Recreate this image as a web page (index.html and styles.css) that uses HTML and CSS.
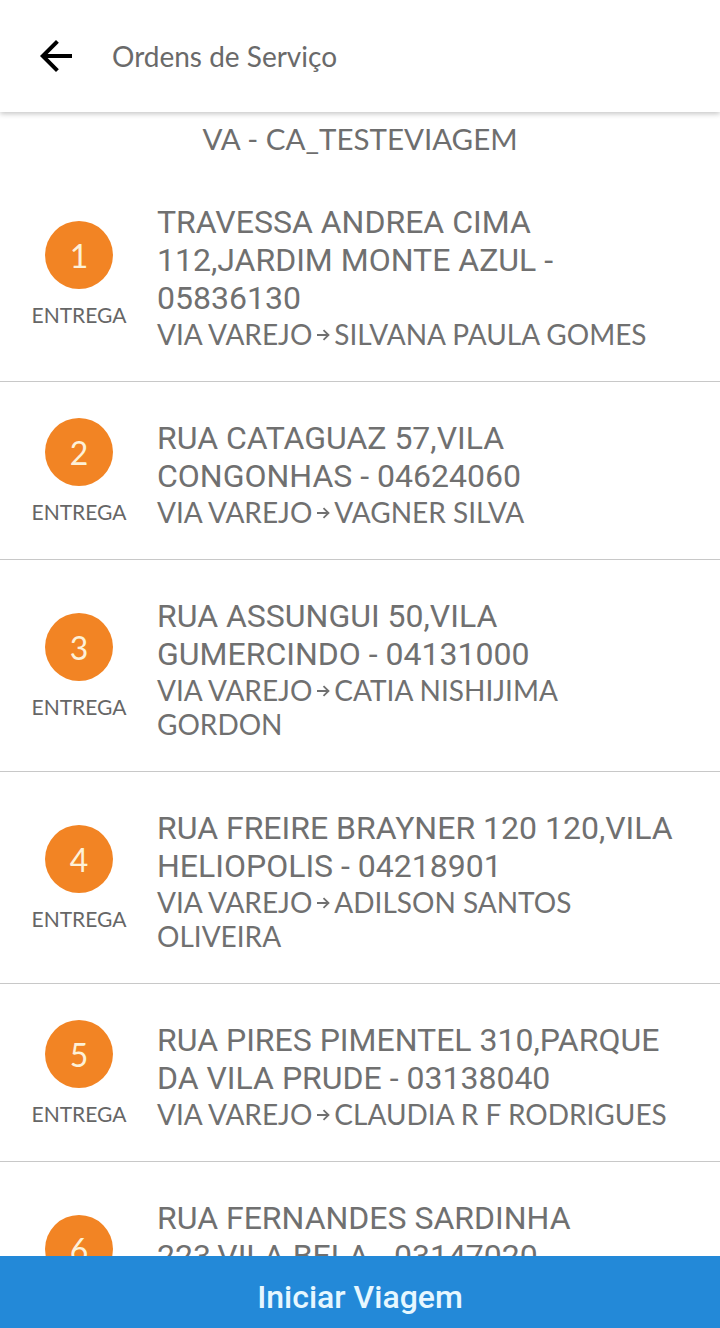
FILE: index.html
```html
<!DOCTYPE html>
<html lang="pt-BR">
<head>
    <meta charset="UTF-8">
    <meta name="viewport" content="width=device-width, initial-scale=1.0">
    <title>Ordens de Serviço</title>
    <link rel="stylesheet" href="styles.css">
</head>
<body>
    <div id="header">
        <svg class="backIcon" viewBox="4 4 16 16" width="32" height="32">
            <path d="M20 11H7.83l5.59-5.59L12 4l-8 8 8 8 1.41-1.41L7.83 13H20v-2z" fill="#000"/>
        </svg>
        <span class="title">Ordens de Serviço</span>
    </div>
    <div id="tripName">VA - CA_TESTEVIAGEM</div>
    <div id="list">
        <div class="item">
            <div class="stop">
                <div class="badge">1</div>
                <div class="kind">ENTREGA</div>
            </div>
            <div class="info">
                <div class="address">TRAVESSA ANDREA CIMA 112,JARDIM MONTE AZUL - 05836130</div>
                <div class="route">VIA VAREJO<svg class="arrow" viewBox="0 0 14 12" width="14" height="12"><path d="M1 6h11.5M7.5 1.2l5 4.8-5 4.8" fill="none" stroke="#707070" stroke-width="1.8"/></svg>SILVANA PAULA GOMES</div>
            </div>
        </div>
        <div class="item">
            <div class="stop">
                <div class="badge">2</div>
                <div class="kind">ENTREGA</div>
            </div>
            <div class="info">
                <div class="address">RUA CATAGUAZ 57,VILA CONGONHAS - 04624060</div>
                <div class="route">VIA VAREJO<svg class="arrow" viewBox="0 0 14 12" width="14" height="12"><path d="M1 6h11.5M7.5 1.2l5 4.8-5 4.8" fill="none" stroke="#707070" stroke-width="1.8"/></svg>VAGNER SILVA</div>
            </div>
        </div>
        <div class="item">
            <div class="stop">
                <div class="badge">3</div>
                <div class="kind">ENTREGA</div>
            </div>
            <div class="info">
                <div class="address">RUA ASSUNGUI 50,VILA GUMERCINDO - 04131000</div>
                <div class="route">VIA VAREJO<svg class="arrow" viewBox="0 0 14 12" width="14" height="12"><path d="M1 6h11.5M7.5 1.2l5 4.8-5 4.8" fill="none" stroke="#707070" stroke-width="1.8"/></svg>CATIA NISHIJIMA GORDON</div>
            </div>
        </div>
        <div class="item">
            <div class="stop">
                <div class="badge">4</div>
                <div class="kind">ENTREGA</div>
            </div>
            <div class="info">
                <div class="address">RUA FREIRE BRAYNER 120 120,VILA HELIOPOLIS - 04218901</div>
                <div class="route">VIA VAREJO<svg class="arrow" viewBox="0 0 14 12" width="14" height="12"><path d="M1 6h11.5M7.5 1.2l5 4.8-5 4.8" fill="none" stroke="#707070" stroke-width="1.8"/></svg>ADILSON SANTOS OLIVEIRA</div>
            </div>
        </div>
        <div class="item">
            <div class="stop">
                <div class="badge">5</div>
                <div class="kind">ENTREGA</div>
            </div>
            <div class="info">
                <div class="address">RUA PIRES PIMENTEL 310,PARQUE DA VILA PRUDE - 03138040</div>
                <div class="route">VIA VAREJO<svg class="arrow" viewBox="0 0 14 12" width="14" height="12"><path d="M1 6h11.5M7.5 1.2l5 4.8-5 4.8" fill="none" stroke="#707070" stroke-width="1.8"/></svg>CLAUDIA R F RODRIGUES</div>
            </div>
        </div>
        <div class="item">
            <div class="stop">
                <div class="badge">6</div>
                <div class="kind">ENTREGA</div>
            </div>
            <div class="info">
                <div class="address">RUA FERNANDES SARDINHA 223,VILA BELA - 03147020</div>
                <div class="route">VIA VAREJO<svg class="arrow" viewBox="0 0 14 12" width="14" height="12"><path d="M1 6h11.5M7.5 1.2l5 4.8-5 4.8" fill="none" stroke="#707070" stroke-width="1.8"/></svg>MARIA APARECIDA DOS SANTOS</div>
            </div>
        </div>
    </div>
    <div id="startBtn">Iniciar Viagem</div>
</body>
</html>
```

FILE: styles.css
```css
body
{
    margin: 0;
    background: #fff;
    color: #6e6e6e;
    font-family: Lato, "Noto Sans", sans-serif;
}
#header
{
    display: flex;
    align-items: center;
    gap: 40px;
    height: 112px;
    padding-left: 40px;
    background: #fff;
    box-shadow: 0 2px 5px rgba(0,0,0,0.22);
    position: relative;
    z-index: 2;
}
#header .title
{
    font-size: 28px;
    color: #6a6a6a;
}
#tripName
{
    text-align: center;
    font-size: 29.5px;
    line-height: 34px;
    padding-top: 10px;
    margin-bottom: 10px;
}
.item
{
    display: flex;
    align-items: center;
    gap: 27px;
    padding: 37px 34px 30px 28px;
    border-bottom: 1px solid #c8c8c8;
}
.stop
{
    width: 102px;
    flex-shrink: 0;
    margin-top: -7px;
    display: flex;
    flex-direction: column;
    align-items: center;
}
.badge
{
    width: 68px;
    height: 68px;
    border-radius: 50%;
    background: #f28424;
    color: #fdf1d8;
    font-size: 32px;
    display: flex;
    align-items: center;
    justify-content: center;
}
.kind
{
    margin-top: 15px;
    font-size: 21px;
    line-height: 22px;
    color: #666;
}
.info
{
    flex: 1;
}
.address
{
    font-family: Roboto, sans-serif;
    font-size: 32px;
    line-height: 38px;
    color: #707070;
}
.route
{
    font-size: 28px;
    line-height: 34px;
    color: #707070;
}
.arrow
{
    vertical-align: 4px;
    margin: 0 4px;
}
#startBtn
{
    position: fixed;
    left: 0;
    right: 0;
    bottom: 0;
    height: 72px;
    box-sizing: border-box;
    padding-top: 10px;
    background: #2389d8;
    color: #e6f7ff;
    font-family: Roboto, sans-serif;
    font-weight: 500;
    font-size: 32px;
    display: flex;
    align-items: center;
    justify-content: center;
}
```
